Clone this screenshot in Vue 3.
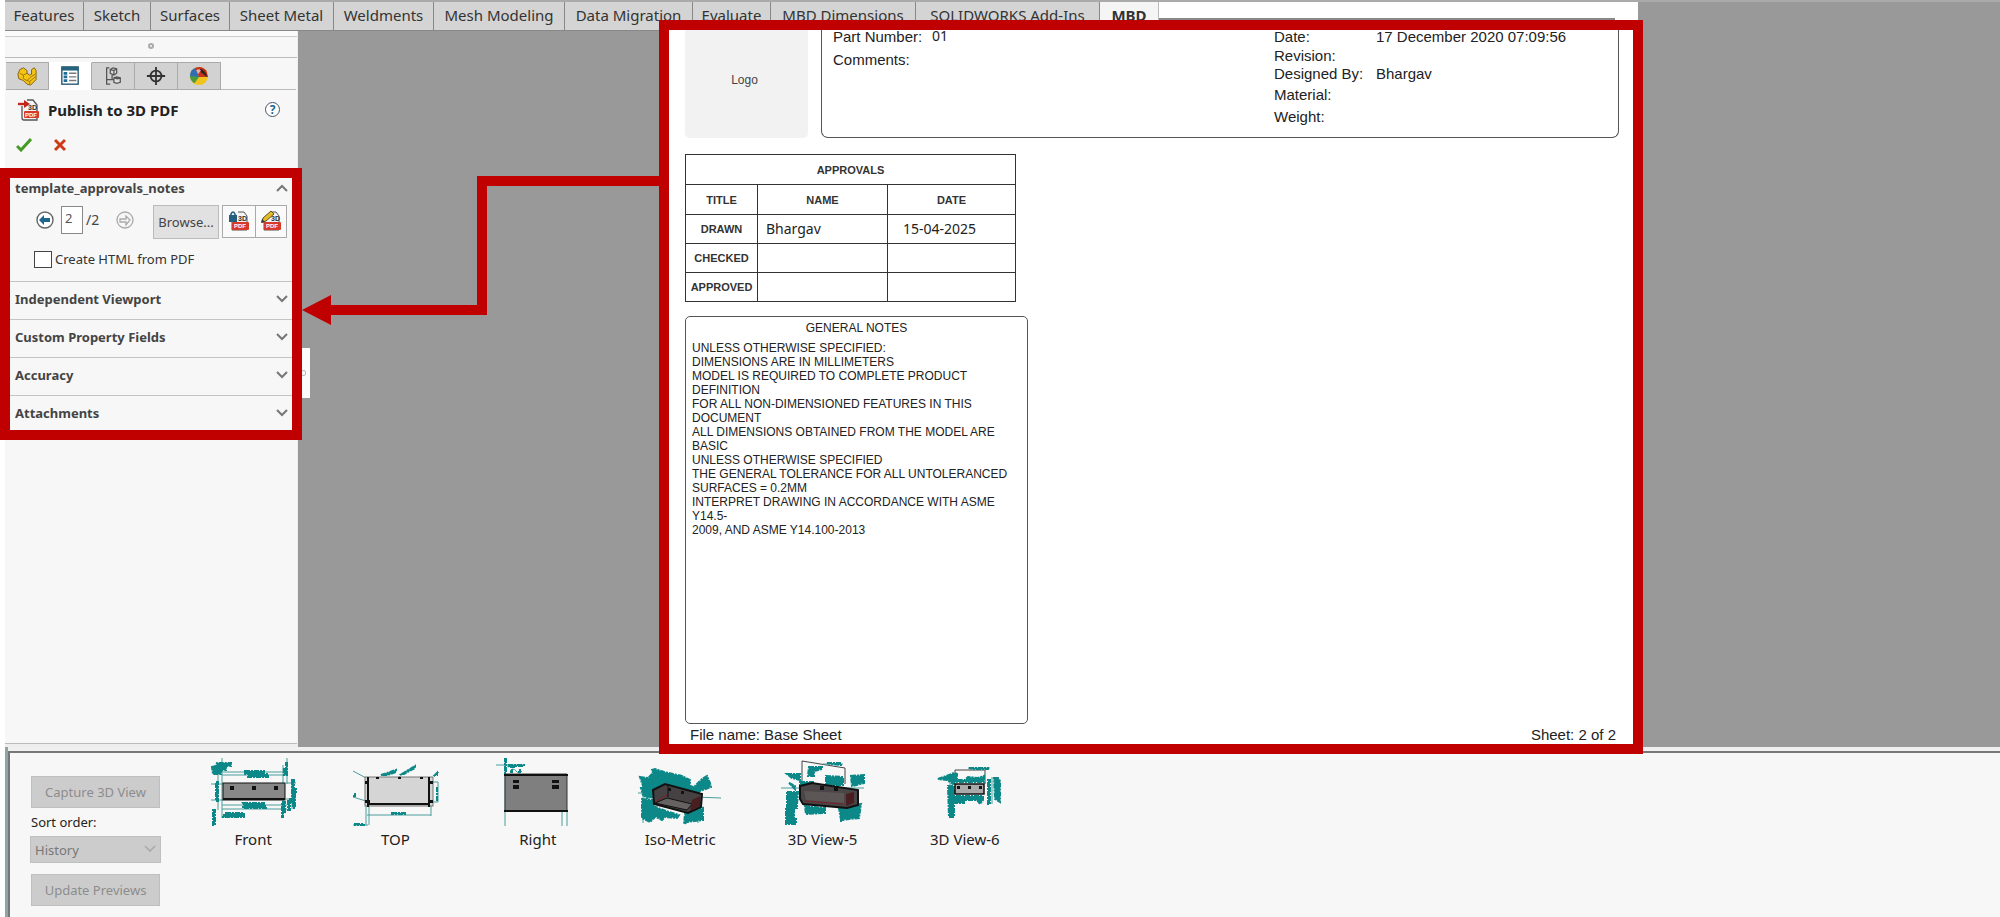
<script setup>
import { ref } from 'vue'

const tabs = ['Features', 'Sketch', 'Surfaces', 'Sheet Metal', 'Weldments', 'Mesh Modeling', 'Data Migration', 'Evaluate', 'MBD Dimensions', 'SOLIDWORKS Add-Ins', 'MBD']
const sections = ['Independent Viewport', 'Custom Property Fields', 'Accuracy', 'Attachments']
const page = ref('2')
const createHtml = ref(false)
const approvals = [
  { title: 'DRAWN', name: 'Bhargav', date: '15-04-2025' },
  { title: 'CHECKED', name: '', date: '' },
  { title: 'APPROVED', name: '', date: '' }
]
const notes = [
  'UNLESS OTHERWISE SPECIFIED:',
  'DIMENSIONS ARE IN MILLIMETERS',
  'MODEL IS REQUIRED TO COMPLETE PRODUCT',
  'DEFINITION',
  'FOR ALL NON-DIMENSIONED FEATURES IN THIS',
  'DOCUMENT',
  'ALL DIMENSIONS OBTAINED FROM THE MODEL ARE',
  'BASIC',
  'UNLESS OTHERWISE SPECIFIED',
  'THE GENERAL TOLERANCE FOR ALL UNTOLERANCED',
  'SURFACES = 0.2MM',
  'INTERPRET DRAWING IN ACCORDANCE WITH ASME',
  'Y14.5-',
  '2009, AND ASME Y14.100-2013'
]
</script>

<template>
  <div class="app">
    <nav class="tabbar">
      <button v-for="t in tabs" :key="t" class="tab" :class="{ active: t === 'MBD' }" type="button">{{ t }}</button>
      <div class="tab-rest"></div>
    </nav>

    <main class="main">
      <aside class="panel">
        <div class="grip"><i></i></div>
        <div class="ptabs">
          <button type="button" class="ptab" aria-label="Feature tree">
            <svg width="22" height="22" viewBox="0 0 22 22"><path d="M1 9l2-5 4-2 4 3v3l3 2 2-1V4l3-2 2 3v10l-6 6-4-1-4-4-5-2z" fill="#f5c414" stroke="#7a5c10" stroke-width="1" /><path d="M3 8l4 2 4-2M7 10v4l4 2 3-3 6-4M11 16l3 1v3M14 17l6-5" fill="none" stroke="#9a7310" /></svg>
          </button>
          <button type="button" class="ptab on" aria-label="Properties">
            <svg width="22" height="22" viewBox="0 0 22 22"><rect x="2" y="1" width="18" height="19" fill="#fff" stroke="#24566f" stroke-width="1.5" /><path d="M2 3h18" stroke="#24647f" stroke-width="4" /><path d="M4 8h4M4 12h4M4 16h4" stroke="#1f6e96" stroke-width="3" /><path d="M10 8h8M10 12h8M10 16h8" stroke="#777" stroke-width="1.5" /></svg>
          </button>
          <button type="button" class="ptab" aria-label="Configurations">
            <svg width="22" height="22" viewBox="0 0 22 22" fill="none" stroke="#555" stroke-width="1.4"><path d="M7 2H4v18h4M4 15h8" /><path d="M8 4l3-2 4 1v5l-3 2-4-2zM8 4l4 1 3-2M12 5v5M12 13l3-1 4 1v5l-4 1-3-1zM12 13l4 1 3-1M10 10v5" fill="#ddd" /></svg>
          </button>
          <button type="button" class="ptab" aria-label="Dimensions">
            <svg width="22" height="22" viewBox="0 0 22 22" fill="none" stroke="#333" stroke-width="2"><circle cx="11" cy="11" r="6" /><path d="M11 1v20M1 11h20" /></svg>
          </button>
          <button type="button" class="ptab" aria-label="Appearances">
            <svg width="22" height="22" viewBox="0 0 22 22"><circle cx="11" cy="11" r="10" fill="#f2c31c" /><path d="M11 12L1 12Q1 3 8 2z" fill="#2f6eb4" /><path d="M11 12L7 2Q14-1 19 5l2 7z" fill="#c8321f" /><path d="M12 3q6 1 8 9l-7-5z" fill="#2d2320" /><path d="M1 11l10 1-5 7Q1 16 1 11z" fill="#4c9a3e" /><path d="M8 5q3-3 5 0l-3 4z" fill="#e9b0a4" /></svg>
          </button>
          <span class="ptab-fill"></span>
        </div>

        <header class="phead">
          <svg width="22" height="22" viewBox="0 0 22 22"><path d="M4 7v12q0 2 2 2h13V6l-4-5H9" fill="#f5f5f5" stroke="#555" stroke-width="1.3" /><text x="10" y="11" class="tiny">3D</text><rect x="6" y="12" width="15" height="7" rx="1" fill="#d63a2b" /><text x="7" y="18" class="tiny inv">PDF</text><path d="M0 5h8" stroke="#c0261b" stroke-width="2.4" /><path d="M6 1l6 4-6 4z" fill="#c0261b" /></svg>
          <h1>Publish to 3D PDF</h1>
          <button type="button" class="help" aria-label="Help">?</button>
        </header>
        <div class="confirm">
          <button type="button" class="bare" aria-label="OK"><svg width="16" height="14" viewBox="0 0 16 14"><path d="M1 8l4 4L15 1" fill="none" stroke="#459b25" stroke-width="3" /></svg></button>
          <button type="button" class="bare" aria-label="Cancel"><svg width="12" height="14" viewBox="0 0 12 14"><path d="M1 2l10 10M11 2L1 12" fill="none" stroke="#cf3a16" stroke-width="3" /></svg></button>
        </div>

        <div class="marked">
          <section class="sec first">
            <h2>template_approvals_notes<svg width="12" height="8" viewBox="0 0 12 8"><path d="M1 7l5-5 5 5" /></svg></h2>
            <div class="pager">
              <button type="button" class="bare" aria-label="Previous page"><svg width="18" height="18" viewBox="0 0 18 18"><circle cx="9" cy="9" r="8" fill="#fff" stroke="#666" stroke-width="1.4" /><path d="M3 9l5-5v3h6v4H8v3z" fill="#1e668f" /></svg></button>
              <input id="page" v-model="page" class="pagebox" aria-label="Page" />
              <label for="page" class="total">/2</label>
              <button type="button" class="bare next" aria-label="Next page"><svg width="18" height="18" viewBox="0 0 18 18" fill="none" stroke="#aaa" stroke-width="1.3"><circle cx="9" cy="9" r="8" /><path d="M14 9l-4-4v3H4v3h6v3z" /></svg></button>
              <button type="button" class="browse">Browse...</button>
              <div class="pdfs">
                <button type="button" aria-label="Protect PDF"><svg width="22" height="22" viewBox="0 0 22 22"><path d="M4 10v10h15V6l-3-4h-6" fill="#f4f4f4" stroke="#555" /><text x="10" y="11" class="tiny">3D</text><rect x="4" y="12" width="17" height="8" rx="1" fill="#d63a2b" /><text x="6" y="18" class="tiny inv">PDF</text><path d="M3 6V4q2-4 4 0v2" fill="none" stroke="#245f80" stroke-width="1.6" /><rect x="1" y="5" width="8" height="7" fill="#245f80" /></svg></button>
                <button type="button" aria-label="Edit PDF template"><svg width="22" height="22" viewBox="0 0 22 22"><path d="M4 10v10h15V6l-3-4h-6" fill="#f4f4f4" stroke="#555" /><text x="11" y="11" class="tiny">3D</text><rect x="4" y="12" width="17" height="8" rx="1" fill="#d63a2b" /><text x="6" y="18" class="tiny inv">PDF</text><path d="M2 12l1-4 8-7 3 3-8 7z" fill="#e5bc28" stroke="#5e5020" /><path d="M1 13l1-4 3 3z" fill="#333" /></svg></button>
              </div>
            </div>
            <div class="check"><input id="html" v-model="createHtml" type="checkbox" /><label for="html">Create HTML from PDF</label></div>
          </section>
          <section v-for="s in sections" :key="s" class="sec">
            <h2>{{ s }}<svg width="12" height="8" viewBox="0 0 12 8"><path d="M1 1l5 5 5-5" /></svg></h2>
          </section>
        </div>
        <div class="flyout"><i></i></div>
        <div class="pfoot"></div>
      </aside>

      <div class="canvas">
        <div class="lane">
          <svg viewBox="0 0 361 150" preserveAspectRatio="none"><path d="M361 10H184V139H28" fill="none" stroke="#c00000" stroke-width="10" /><path d="M4 139l29-15v30z" fill="#c00000" /></svg>
        </div>
        <article class="sheet">
          <header class="shead">
            <div class="logo">Logo</div>
            <div class="info">
              <dl class="left">
                <dt>Part Number:</dt><dd class="ui">01</dd>
                <dt>Comments:</dt><dd></dd>
              </dl>
              <dl class="right">
                <dt>Date:</dt><dd>17 December 2020 07:09:56</dd>
                <dt>Revision:</dt><dd></dd>
                <dt>Designed By:</dt><dd>Bhargav</dd>
                <dt>Material:</dt><dd></dd>
                <dt>Weight:</dt><dd></dd>
              </dl>
            </div>
          </header>
          <table class="approvals">
            <colgroup><col class="c1" /><col class="c2" /><col /></colgroup>
            <thead>
              <tr><th colspan="3">APPROVALS</th></tr>
              <tr><th>TITLE</th><th>NAME</th><th>DATE</th></tr>
            </thead>
            <tbody>
              <tr v-for="a in approvals" :key="a.title"><th>{{ a.title }}</th><td class="nm">{{ a.name }}</td><td class="dt">{{ a.date }}</td></tr>
            </tbody>
          </table>
          <section class="notes">
            <h3>GENERAL NOTES</h3>
            <p v-for="(n, i) in notes" :key="i">{{ n }}</p>
          </section>
          <footer class="sfoot"><span>File name:</span><span class="fname">Base Sheet</span><span class="num">Sheet: 2 of 2</span></footer>
        </article>
      </div>
    </main>

    <div class="bottom">
      <div class="tray">
        <form class="controls" @submit.prevent>
          <button type="button" disabled>Capture 3D View</button>
          <label for="sort">Sort order:</label>
          <div class="selwrap">
            <select id="sort" disabled><option>History</option></select>
            <svg width="12" height="8" viewBox="0 0 12 8"><path d="M1 1l5 5 5-5" fill="none" stroke="#aaa" stroke-width="1.6" /></svg>
          </div>
          <button type="button" class="upd" disabled>Update Previews</button>
        </form>
        <div class="views">
          <figure>
            <svg class="thumb" viewBox="0 0 90 72">
              <g class="ln"><path d="M14 3v60M79 3v26M14 17h65M14 20h65M10 15v40M3 29h12M3 45h12M14 50h65M14 54h65M75 10v50M84 24v30M78 28h10M78 44h10M30 62H16" /></g>
              <g class="tl"><path d="M4 12l4-1 1-3h14v3h-5v4h-5v4H5zM37 16h19v3h4v3H40v-3h-3zM35 48h21v3h2v2H35v-2h2zM18 58h18v4H15v-2h3zM8 27h2v19H8zM5 55h2v15H5zM78 8h1v12h-3v-7h2zM84 25h2v9h2v5h-1v14h-2v-5h-3v-4h2zM74 47h3v11h-2v4h-1zM80 46h2v9h-2z" /></g>
              <rect x="15" y="28" width="62" height="17" fill="#888" stroke="#111" /><path d="M15 44h62" stroke="#111" stroke-width="2" /><path d="M22 31h4v4h-4zM44 31h4v4h-4zM66 31h4v4h-4z" fill="#111" />
            </svg>
            <figcaption>Front</figcaption>
          </figure>
          <figure>
            <svg class="thumb" viewBox="0 0 90 72">
              <g class="ln"><path d="M3 16l13 7M3 42l13 4M16 50v20M19 50v20M17 60h64M81 50v11M3 70h15M84 22l5-5M81 27h7v20h-7M49 22l10-8" /></g>
              <g class="tl"><path d="M31 20l15-5v2l-8 3zM52 19l13-8v2l-11 6zM4 39h1v2H4zM5 69h9v1H5zM42 58h14v1H42zM87 32v14M85 20l2-2v2z" /></g>
              <rect x="15" y="22" width="68" height="29" fill="#d5d5d5" stroke="#777" /><path d="M18 22v30M79 22v30M18 49h61" stroke="#111" stroke-width="2" /><path d="M26 22h3v2h-3zM48 22h3v2h-3zM70 22h3v2h-3zM15 26h4v3h-4zM15 45h5v3h-5zM78 26h5v3h-5zM78 45h5v3h-5z" fill="#111" />
            </svg>
            <figcaption>TOP</figcaption>
          </figure>
          <figure>
            <svg class="thumb" viewBox="0 0 90 72">
              <g class="ln"><path d="M12 3v68M3 10h28M69 56v15M74 56v15M17 16q3-4 6 0t6 0" /></g>
              <g class="tl"><path d="M12 4h1v14h-1zM15 10h16v1h-8v1h-7zM18 15h1v2h-1zM26 15h1v2h-1z" /></g>
              <path d="M12 19h62v37H12z" fill="#7f7f7f" stroke="#333" /><path d="M11 20h64M11 56h64" stroke="#111" stroke-width="2" /><path d="M20 25h6v3h-6zM20 30h6v4h-6zM59 25h7v3h-7zM59 30h7v4h-7z" fill="#111" />
            </svg>
            <figcaption>Right</figcaption>
          </figure>
          <figure>
            <svg class="thumb" viewBox="0 0 90 72">
              <g class="ln"><path d="M3 38h20M60 42l26 1M8 30v38M63 38v30M15 22l8-6" /></g>
              <g class="tl"><path d="M5 22l8 1 5-5-1-3 3-1 9 3 18 4 8 4v6l4 1 8-8 5-3 3 7 1 4-11 4-6 5-14-4-8 5-13-4-8-2-7-2zM6 33h10l2 9-6 1-4-3zM7 44l12 1v18l-4 4-8-4zM18 51l13 5 13 4-2 3-12-1-3 3-8-4zM50 59l18-6v12l-16 2-3 2z" /></g>
              <path d="M18 35l12-6 37 10-1 13-13 6-34-9z" fill="#464243" stroke="#111" stroke-width="2" /><path d="M20 48l12-5 25 6-5 6z" fill="#676262" stroke="#111" /><path d="M33 30v12" stroke="#111" /><path d="M55 56l10-5V41l-8 4z" fill="#4a1d20" /><path d="M20 47l12-7" stroke="#7a2024" /><path d="M33 33h3v3h-3zM46 36h3v3h-3z" fill="#111" />
            </svg>
            <figcaption>Iso-Metric</figcaption>
          </figure>
          <figure>
            <svg class="thumb" viewBox="0 0 90 72">
              <path d="M25 31V6l43 7v16" fill="none" stroke="#444" /><g class="ln"><path d="M4 33h83M11 36v33M17 36v33M64 45v20M46 9h20" /></g>
              <g class="tl"><path d="M10 19h13v6l-8-2zM32 12h13v2l-8 2v5h-6zM50 8h14v2l-10-1zM49 21l17 1v8H49zM74 21l13-1v8l-12 3zM10 37h11l-1 12v4H10zM9 52h8v12h2v5H9zM28 51l20 2v5l-19 1zM23 27h14v3H23zM12 28l6 3v3zM62 53l22-4-2 14-10 1-8 1zM64 60h2v6h-2z" /></g>
              <path d="M23 31l12-3 46 7v15l-11 3-44-4-3-5z" fill="#4a4546" stroke="#111" stroke-width="2" /><path d="M27 36l40 2v10l-38-3z" fill="#5d5657" /><path d="M69 39l8-2v11l-8 3z" fill="#4a1d20" /><path d="M28 46l38 3" stroke="#7a2024" /><path d="M43 31h4v4h-4zM57 32h4v4h-4z" fill="#111" />
            </svg>
            <figcaption>3D View-5</figcaption>
          </figure>
          <figure>
            <svg class="thumb" viewBox="0 0 90 72">
              <path d="M35 24v-9h30v14" fill="none" stroke="#444" /><g class="ln"><path d="M30 28v34M72 22v27M48 13h22" /></g>
              <g class="tl"><path d="M18 24l8-3 8-3 3 1v6h8l3-3 10 1 6-2v6H36l-3 2-6-4zM49 13h19v1H53zM28 31h6v10h29v4l-3 4-3-4H44v3H34v14h-5zM68 25h2v24h-2zM74 23h4l2 3v21l-5-3z" /></g>
              <rect x="35" y="29" width="29" height="10" fill="#aaa" stroke="#111" stroke-width="1.5" /><path d="M37 31h3v3h-3zM48 31h3v3h-3zM59 31h3v3h-3z" fill="#111" />
            </svg>
            <figcaption>3D View-6</figcaption>
          </figure>
        </div>
      </div>
    </div>
  </div>
</template>

<style>
body { background: #fff; }
</style>

<style scoped>
* { box-sizing: border-box; }
.app { display: grid; grid-template-rows: 31px 1fr 170px; min-height: 100vh; font-family: "Noto Sans", "Open Sans", sans-serif; font-size: 13px; color: #222; overflow: hidden; }
button { font: inherit; color: inherit; padding: 0; cursor: pointer; }
h1, h2, h3, p, dl, dd, figure { margin: 0; }

.tabbar { display: grid; grid-template-columns: 79px 67px 79px 104px 100px 131px 128px 78px 145px 184px 59px 479px; background: #999; margin-left: 5px; border-top: 2px solid #aaa; }
.tab { border: 0; border-right: 1px solid #888; border-bottom: 1px solid #888; background: #d4d4d4; font-size: 15px; line-height: 20px; padding-bottom: 2px; white-space: nowrap; color: #333; text-align: center; }
.tab.active { background: #f5f5f5; font-weight: bold; border-right-color: #bbb; }
.tab-rest { background: linear-gradient(#888, #888) 0 16px / 456px 2px no-repeat #fff; }

.main { display: flex; min-width: 0; }
.panel { position: relative; flex: 0 0 293px; margin-left: 5px; background: #f7f7f7; display: flex; flex-direction: column; z-index: 2; border-right: 1px solid #eee; }
.grip { height: 27px; border-top: 5px solid #fafafa; border-bottom: 1px solid #bbb; display: flex; align-items: center; justify-content: center; box-shadow: inset 0 1px #ccc; padding-bottom: 2px; }
.grip i { width: 6px; height: 6px; border: 2px solid #aaa; border-radius: 50%; }
.ptabs { display: flex; margin: 4px 1px 0; height: 28px; }
.ptab { flex: 0 0 43px; border: 1px solid #aaa; border-left-width: 0; background: #d2d2d2; display: flex; align-items: center; justify-content: center; }
.ptab.on { background: #fff; border-color: transparent #aaa transparent transparent; }
.ptab-fill { flex: 1; border-bottom: 1px solid #bbb; }
.ptab svg { width: 20px; height: 20px; }
.tiny { font: bold 7px "Liberation Sans", sans-serif; fill: #333; }
.tiny.inv { font-size: 6px; fill: #fff; }
.phead { display: flex; align-items: center; height: 39px; padding: 0 17px 0 13px; }
.phead h1 { font-size: 15px; line-height: 20px; margin-left: 8px; flex: 1; white-space: nowrap; }
.help { width: 15px; height: 15px; border: 1px solid #456; border-radius: 50%; background: #fff; color: #1f668c; font-size: 12px; font-weight: bold; line-height: 12px; }
.confirm { display: flex; gap: 22px; height: 39px; padding: 9px 0 0 11px; align-items: flex-start; }
.bare { border: 0; background: none; display: flex; }
.marked { margin: 0 -5px 0 -5px; border: 10px solid #c00000; position: relative; z-index: 2; background: #f7f7f7; }
.sec { border-top: 1px solid #c4c4c4; height: 38px; padding: 0 4px 0 5px; }
.sec:last-child { height: 35px; }
.sec.first { height: 103px; border-top: 0; }
.sec h2 { display: flex; align-items: center; justify-content: space-between; font-size: 13px; line-height: 18px; height: 34px; color: #444; }
.sec.first h2 { height: 20px; }
.sec h2 svg { fill: none; stroke: #777; stroke-width: 2; }
.pager { display: flex; align-items: center; height: 43px; padding-left: 21px; color: #444; }
.pagebox { width: 22px; height: 28px; margin-left: 7px; border: 1px solid #888; background: #fff; font: inherit; padding: 0 3px 3px; color: #555; }
.total { margin-left: 3px; width: 14px; font-size: 14px; }
.next { margin-left: 16px; }
.browse { margin: 5px 0 0 19px; width: 66px; height: 34px; border: 1px solid #bbb; background: #e1e1e1; white-space: nowrap; }
.pdfs { display: flex; margin: 3px 0 0 3px; height: 33px; border: 1px solid #aaa; }
.pdfs button { width: 32px; border: 0; background: #fafafa; display: flex; align-items: center; justify-content: center; }
.pdfs button + button { border-left: 1px solid #aaa; width: 31px; }
.check { display: flex; align-items: center; height: 36px; padding-left: 19px; gap: 3px; color: #333; }
.check input { appearance: none; width: 18px; height: 17px; margin: 0; border: 1px solid #444; background: #fff; }
.flyout { position: absolute; left: 293px; top: 317px; width: 12px; height: 50px; background: #fbfbfb; z-index: 1; display: flex; align-items: center; justify-content: flex-end; padding-right: 4px; }
.flyout i { width: 5px; height: 6px; border: 1px solid #bbb; border-radius: 2px; }
.pfoot { margin-top: auto; height: 4px; border-top: 1px solid #bbb; background: #eee; }

.canvas { flex: 1; min-width: 0; display: grid; grid-template-columns: 361fr 984fr 357fr; background: #999; }
.lane { padding-top: 140px; }
.lane svg { display: block; width: 100%; height: 150px; overflow: visible; }
.sheet { min-width: 0; margin: -11px 0 -7px; border: 10px solid #c00000; background: #fff; z-index: 3; display: flex; flex-direction: column; padding: 0 14px 0 16px; font-family: "Liberation Sans", Arial, sans-serif; }
.shead { display: flex; gap: 13px; height: 108px; }
.logo { flex: 0 0 123px; background: #f2f2f2; border-radius: 0 0 5px 5px; display: flex; align-items: center; justify-content: center; font-size: 12px; color: #444; padding: 0 4px 8px 0; }
.info { flex: 1; display: flex; border: 1px solid #555; border-top: 0; border-radius: 0 0 7px 7px; font-size: 15px; line-height: 14px; color: #222; white-space: nowrap; }
dl { display: grid; align-content: start; }
.left { flex: 1; grid-template-columns: 99px 1fr; grid-template-rows: 23px 23px; padding-left: 11px; }
.right { flex: 0 0 344px; grid-template-columns: 102px 1fr; grid-template-rows: 19px 18px 21px 22px 22px; }
.ui { font-family: "Noto Sans", sans-serif; font-size: 14px; line-height: 12px; }
.approvals { border-collapse: collapse; width: 331px; margin-top: 16px; table-layout: fixed; }
.approvals th, .approvals td { border: 1px solid #333; padding: 0; height: 29px; }
.approvals thead th { height: 30px; }
.approvals th { font-size: 11px; line-height: 14px; color: #333; }
.approvals .c1 { width: 72px; }
.approvals .c2 { width: 130px; }
.approvals td { font-family: "Noto Sans", sans-serif; font-size: 14px; line-height: 18px; }
.approvals .nm { padding-left: 8px; }
.approvals .dt { padding-left: 15px; }
.notes { width: 343px; flex: 1; margin-top: 14px; border: 1px solid #555; border-radius: 5px; padding: 4px 6px; font-size: 12px; line-height: 14px; white-space: nowrap; color: #222; }
.notes h3 { font-size: 12px; font-weight: normal; text-align: center; margin-bottom: 6px; }
.sfoot { display: flex; height: 20px; line-height: 22px; font-size: 15px; padding: 0 3px 0 5px; }
.fname { margin-left: 4px; }
.num { margin-left: auto; }

.bottom { border-left: 3px solid #8fa5a5; margin-left: 5px; background: #f0f0f0; padding-top: 4px; }
.tray { height: 100%; background: #f7f7f7; border-top: 2px solid #777; border-left: 2px solid #777; display: flex; }
.controls { width: 131px; margin-left: 20px; padding-top: 23px; display: flex; flex-direction: column; }
.controls button { height: 32px; width: 129px; margin-left: 1px; border: 1px solid #bfbfbf; background: #ccc; color: #8c8c8c; }
.controls label { height: 28px; line-height: 28px; padding-left: 1px; }
.selwrap { position: relative; }
select { appearance: none; display: block; width: 131px; height: 27px; border: 1px solid #bfbfbf; background: #ccc; color: #777; font: inherit; padding: 0 4px; opacity: 1; }
.selwrap svg { position: absolute; right: 5px; top: 9px; }
.upd { margin-top: 11px; }
.views { display: grid; grid-template-columns: repeat(6, 1fr); width: 854px; margin-left: 21px; align-content: start; padding-top: 2px; }
figure { display: flex; flex-direction: column; align-items: center; }
.thumb { width: 90px; height: 72px; }
.tl { fill: #0d8888; stroke: #0d8888; stroke-width: 2; stroke-dasharray: 5 1 2 1; }
.ln { fill: none; stroke: #4a9d9d; stroke-width: 1; }
figcaption { font-size: 15px; line-height: 20px; margin-top: 2px; }
</style>
